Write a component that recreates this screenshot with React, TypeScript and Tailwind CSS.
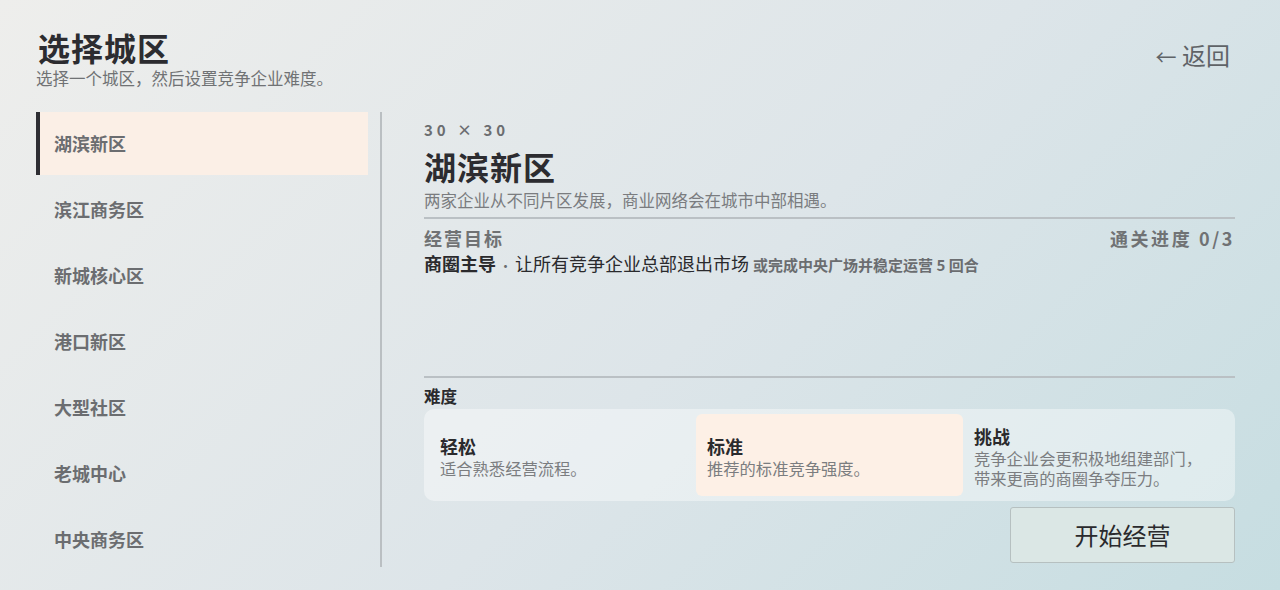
import React, { useState } from "react";

interface District {
  id: string;
  name: string;
}

interface Difficulty {
  id: string;
  title: string;
  desc: string[];
}

const districts: District[] = [
  { id: "lakeside", name: "湖滨新区" },
  { id: "riverside", name: "滨江商务区" },
  { id: "newtown", name: "新城核心区" },
  { id: "harbor", name: "港口新区" },
  { id: "community", name: "大型社区" },
  { id: "oldtown", name: "老城中心" },
  { id: "cbd", name: "中央商务区" },
];

const difficulties: Difficulty[] = [
  { id: "easy", title: "轻松", desc: ["适合熟悉经营流程。"] },
  { id: "normal", title: "标准", desc: ["推荐的标准竞争强度。"] },
  {
    id: "hard",
    title: "挑战",
    desc: ["竞争企业会更积极地组建部门，", "带来更高的商圈争夺压力。"],
  },
];

const font = { fontFamily: '"Noto Sans CJK SC", "Noto Sans", sans-serif' };

export default function App() {
  const [selected, setSelected] = useState("lakeside");
  const [level, setLevel] = useState("normal");

  return (
    <div
      style={font}
      className="h-[590px] w-full overflow-hidden bg-[linear-gradient(135deg,#eeeeec_0%,#dde5e9_55%,#c6dde1_100%)] pl-9 pr-[45px] pt-[27px] flex flex-col"
    >
      <header className="flex items-start justify-between">
        <div>
          <h1 className="pl-[2px] text-[32px] leading-[40px] font-bold tracking-[1px] text-[#2c2c30]">
            选择城区
          </h1>
          <p className="text-[16.5px] leading-[22px] text-[#707274]">
            选择一个城区，然后设置竞争企业难度。
          </p>
        </div>
        <button className="mt-3 mr-[5px] text-[24px] leading-[32px] text-[#5f6367] cursor-pointer">
          <span className="text-[21px]">←</span> 返回
        </button>
      </header>

      <div className="mt-[23px] flex">
        <nav className="w-[332px] flex flex-col gap-[3px]">
          {districts.map((d) => {
            const active = d.id === selected;
            return (
              <button
                key={d.id}
                onClick={() => setSelected(d.id)}
                className={`h-[63px] pl-[14px] text-left text-[18px] font-bold text-[#6b6d70] border-l-4 cursor-pointer ${
                  active ? "border-[#2e2e33] bg-[#fbefe6]" : "border-transparent"
                }`}
              >
                {d.name}
              </button>
            );
          })}
        </nav>

        <div className="ml-3 w-[2px] h-[455px] bg-[#babfc2]" />

        <section className="ml-[42px] w-[811px] pt-[8px] flex flex-col">
          <div className="text-[15px] leading-[20px] font-bold tracking-[4px] text-[#6b6d70]">
            30 × 30
          </div>
          <h2 className="mt-[6px] text-[32px] leading-[40px] font-bold tracking-[1px] text-[#2c2c30]">
            湖滨新区
          </h2>
          <p className="mt-[3px] text-[16.5px] leading-[22px] text-[#7a7c7f]">
            两家企业从不同片区发展，商业网络会在城市中部相遇。
          </p>
          <div className="mt-[6px] h-[2px] bg-[#bac0c4]" />

          <div className="mt-[7px] flex items-center justify-between text-[18px] leading-[24px] font-bold tracking-[2px] text-[#707274]">
            <span>经营目标</span>
            <span className="tracking-[2.6px]">通关进度 0/3</span>
          </div>
          <div className="mt-[1px] text-[18px] leading-[24px] text-[#2a2a2d]">
            <span className="font-bold">商圈主导</span>
            <span className="inline-block w-[19px] text-center text-[14px] text-[#6b6d70]">·</span>
            <span>让所有竞争企业总部退出市场</span>{" "}
            <span className="text-[15px] font-bold text-[#6b6d70]">
              或完成中央广场并稳定运营 5 回合
            </span>
          </div>

          <div className="mt-[99px] h-[2px] bg-[#bac0c4]" />

          <div className="mt-[7px] text-[16.5px] leading-[22px] font-bold text-[#2a2a2d]">
            难度
          </div>
          <div className="mt-[2px] h-[92px] rounded-[10px] bg-white/40 p-[5px] grid grid-cols-3">
            {difficulties.map((lv) => {
              const active = lv.id === level;
              return (
                <button
                  key={lv.id}
                  onClick={() => setLevel(lv.id)}
                  className={`rounded-[6px] px-[11px] pt-[3px] text-left flex flex-col justify-center cursor-pointer ${
                    active ? "bg-[#fdf0e6]" : ""
                  }`}
                >
                  <span className="text-[18px] leading-[23px] font-bold text-[#2a2a2d]">
                    {lv.title}
                  </span>
                  <span className="text-[16.3px] leading-[20.5px] text-[#7b7d80]">
                    {lv.desc.map((line, i) => (
                      <React.Fragment key={line}>
                        {i > 0 && <br />}
                        {line}
                      </React.Fragment>
                    ))}
                  </span>
                </button>
              );
            })}
          </div>

          <button className="mt-[6px] self-end w-[225px] h-[56px] rounded-[3px] border border-[#b6c0c0] bg-[#dbe7e5] text-[24px] text-[#2a2a2d] cursor-pointer">
            开始经营
          </button>
        </section>
      </div>
    </div>
  );
}
